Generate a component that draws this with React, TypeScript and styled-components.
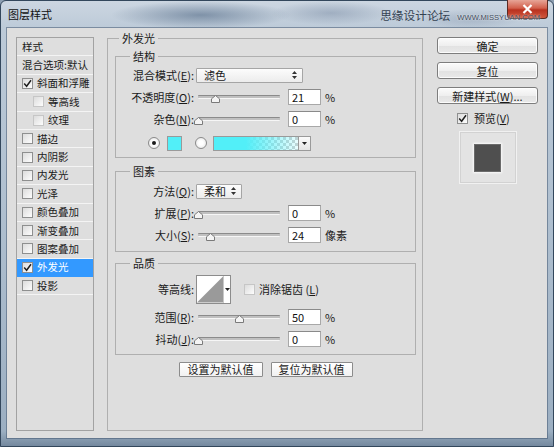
import React from "react";
import styled, { createGlobalStyle } from "styled-components";

const GlobalStyle = createGlobalStyle`
  html, body {
    margin: 0;
    padding: 0;
  }
  body {
    width: 554px;
    height: 447px;
    overflow: hidden;
    background: #8d9fb2;
    font-family: "Noto Sans CJK SC", "Liberation Sans", sans-serif;
    font-size: 11px;
    color: #1a1a1a;
  }
`;

const Window = styled.div`
  position: relative;
  width: 554px;
  height: 447px;
  box-sizing: border-box;
  display: flex;
  flex-direction: column;
  border: 1px solid #33475c;
  border-radius: 6px 6px 0 0;
  background:
    radial-gradient(ellipse 90px 14px at 200px 14px, rgba(70, 95, 125, 0.55), transparent),
    radial-gradient(ellipse 60px 12px at 330px 12px, rgba(90, 110, 140, 0.35), transparent),
    radial-gradient(ellipse 50px 10px at 470px 18px, rgba(90, 110, 140, 0.25), transparent),
    linear-gradient(180deg, #ccd6e1 0px, #bccad8 28px, #b0c0d0 200px, #9cafc2 430px, #6f849a 447px);
`;

const TitleBar = styled.div`
  height: 27px;
  flex-shrink: 0;
  display: flex;
  align-items: flex-start;
  padding: 6px 13px 0 7px;
  box-sizing: border-box;
`;

const Title = styled.span`
  font-size: 11px;
  line-height: 14px;
  color: #111;
`;

const Watermark = styled.div`
  margin-left: auto;
  display: flex;
  align-items: baseline;
  gap: 7px;
  position: relative;
  z-index: 1;
`;

const WatermarkCn = styled.span`
  font-size: 11.7px;
  line-height: 16px;
  color: #344252;
`;

const WatermarkUrl = styled.span`
  font-family: "Liberation Sans", sans-serif;
  font-size: 7.6px;
  color: #3f4b5a;
  text-shadow: 0 0 2px #fff;
`;

const CloseButton = styled.div`
  position: absolute;
  top: -1px;
  right: 5px;
  width: 41px;
  height: 19px;
  box-sizing: border-box;
  border: 1px solid #5b2b22;
  border-top: none;
  border-radius: 0 0 4px 4px;
  background: linear-gradient(180deg, #e7a597 0%, #d2604c 45%, #b9321f 55%, #d0563c 100%);
  display: flex;
  align-items: center;
  justify-content: center;
`;

const Body = styled.div`
  flex: 1;
  min-height: 0;
  margin: 0 6px 8px 6px;
  padding: 9px 9px 7px 9px;
  box-sizing: border-box;
  display: flex;
  align-items: stretch;
  background: #dedede;
  box-shadow: 0 0 0 1px rgba(70, 90, 115, 0.55);
`;

/* ---------- left list ---------- */

const StyleList = styled.div`
  width: 78px;
  flex-shrink: 0;
  box-sizing: border-box;
  border: 1px solid #a2a2a2;
  display: flex;
  flex-direction: column;
`;

const ListItem = styled.div<{ $indent?: boolean; $selected?: boolean }>`
  height: 18.4px;
  flex-shrink: 0;
  box-sizing: border-box;
  display: flex;
  align-items: center;
  gap: 4px;
  padding-left: ${(p) => (p.$indent ? 16 : 5)}px;
  border-bottom: 1px solid ${(p) => (p.$selected ? "#3399ff" : "#f4f4f4")};
  background: ${(p) => (p.$selected ? "#3399ff" : "transparent")};
  color: ${(p) => (p.$selected ? "#fff" : "#1a1a1a")};
  font-size: 10.5px;
  line-height: 14px;
  white-space: nowrap;
`;

const CheckBox = styled.span<{ $faint?: boolean }>`
  width: 11px;
  height: 11px;
  flex-shrink: 0;
  box-sizing: border-box;
  border: 1px solid ${(p) => (p.$faint ? "#c6c6c6" : "#8e8f8f")};
  background: linear-gradient(135deg, #dcdcdc, #fdfdfd);
  display: inline-flex;
  align-items: center;
  justify-content: center;
`;

/* ---------- middle groups ---------- */

const OuterGroup = styled.fieldset`
  width: 316px;
  flex-shrink: 0;
  margin: -6px 0 0 13px;
  padding: 4px 6px 0 7px;
  box-sizing: border-box;
  border: 1px solid #afafaf;
  min-width: 0;
`;

const Legend = styled.legend<{ $inner?: boolean }>`
  padding: 0 3px;
  margin-left: ${(p) => (p.$inner ? 14 : 4)}px;
  font-size: 11px;
  line-height: 14px;
`;

const Section = styled.fieldset<{ $mt: number; $pt: number; $pb: number }>`
  margin: ${(p) => p.$mt}px 0 0 0;
  padding: ${(p) => p.$pt}px 0 ${(p) => p.$pb}px 0;
  border: 1px solid #afafaf;
  min-width: 0;
`;

const Row = styled.div<{ $h?: number }>`
  height: ${(p) => p.$h ?? 22}px;
  display: flex;
  align-items: center;
`;

const FieldLabel = styled.span`
  width: 78px;
  flex-shrink: 0;
  margin-right: 2px;
  text-align: right;
  white-space: nowrap;
  line-height: 14px;
`;

const Select = styled.div<{ $w: number }>`
  width: ${(p) => p.$w}px;
  height: 15px;
  box-sizing: border-box;
  border: 1px solid #a5a5a5;
  border-radius: 1px;
  background: linear-gradient(#fcfcfc, #ececec);
  display: flex;
  align-items: center;
  justify-content: space-between;
  padding: 0 5px 0 7px;
  line-height: 13px;
`;

const Slider = styled.div`
  position: relative;
  width: 86px;
  height: 12px;
  flex-shrink: 0;
  display: flex;
  align-items: center;
`;

const Track = styled.div`
  flex: 1;
  margin: 0 2px;
  height: 4px;
  box-sizing: border-box;
  border-top: 1px solid #8b8b8b;
  border-bottom: 1px solid #f6f6f6;
  background: #c0c0c0;
  border-radius: 1px;
`;

const Thumb = styled.svg`
  position: absolute;
  top: 4px;
`;

const NumberBox = styled.input`
  width: 33px;
  height: 16px;
  margin: 0 0 0 6px;
  box-sizing: border-box;
  border: 1px solid #a8a8a8;
  border-top-color: #8a8a8a;
  background: #fff;
  padding: 0 0 0 3px;
  font: inherit;
  font-size: 11px;
  color: #111;
  outline: none;
`;

const Unit = styled.span`
  margin-left: 4px;
  line-height: 14px;
`;

const ColorRow = styled.div`
  height: 22px;
  margin-top: 2px;
  display: flex;
  align-items: center;
  padding-left: 32px;
`;

const Radio = styled.span<{ $on?: boolean; $gap?: number }>`
  width: 12px;
  height: 12px;
  margin-left: ${(p) => p.$gap ?? 0}px;
  flex-shrink: 0;
  box-sizing: border-box;
  border-radius: 50%;
  border: 1px solid #8a8a8a;
  background: radial-gradient(circle at 50% 50%, #ffffff 30%, #e0e0e0);
  display: flex;
  align-items: center;
  justify-content: center;
  &::after {
    content: "";
    width: 4px;
    height: 4px;
    border-radius: 50%;
    background: ${(p) => (p.$on ? "#1b1b1b" : "transparent")};
  }
`;

const Swatch = styled.span`
  width: 15px;
  height: 15px;
  margin-left: 7px;
  box-sizing: border-box;
  border: 1px solid #9a9a9a;
  background: #52eff8;
`;

const GradientPicker = styled.div`
  margin-left: 6px;
  width: 98px;
  height: 15px;
  box-sizing: border-box;
  border: 1px solid #9a9a9a;
  display: flex;
`;

const GradientBar = styled.span`
  flex: 1;
  background:
    linear-gradient(90deg, #52eff8 0%, #52eff8 38%, rgba(82, 239, 248, 0.12) 100%),
    repeating-conic-gradient(#cfcfcf 0 25%, #ffffff 0 50%) 0 0 / 6px 6px;
`;

const DropButton = styled.span`
  width: 11px;
  border-left: 1px solid #9a9a9a;
  background: linear-gradient(#fbfbfb, #e4e4e4);
  display: flex;
  align-items: center;
  justify-content: center;
`;

const ContourPicker = styled.div`
  width: 35px;
  height: 29px;
  box-sizing: border-box;
  border: 1px solid #8c8c8c;
  background: #fff;
  display: flex;
`;

const ContourStrip = styled.span`
  width: 6px;
  border-left: 1px solid #c8c8c8;
  display: flex;
  align-items: center;
  justify-content: center;
`;

const OptionLabel = styled.label`
  margin-left: 13px;
  display: flex;
  align-items: center;
  gap: 4px;
  line-height: 14px;
`;

const DefaultsRow = styled.div`
  margin-top: 7px;
  display: flex;
  justify-content: center;
  gap: 8px;
`;

const PlainButton = styled.button<{ $w: number }>`
  width: ${(p) => p.$w}px;
  height: 15px;
  padding: 0;
  box-sizing: border-box;
  border: 1px solid #8c8c8c;
  border-radius: 1px;
  background: linear-gradient(#ffffff, #f1f1f1);
  font: inherit;
  font-size: 11px;
  line-height: 13px;
  color: #1a1a1a;
`;

/* ---------- right column ---------- */

const SideColumn = styled.div`
  width: 101px;
  margin-left: 14px;
  flex-shrink: 0;
  display: flex;
  flex-direction: column;
`;

const SideButton = styled.button`
  width: 101px;
  height: 17px;
  margin: 0 0 8px 0;
  padding: 0;
  box-sizing: border-box;
  border: 1px solid #7d7d7d;
  border-radius: 3px;
  background: linear-gradient(#fbfbfb 0%, #efefef 50%, #e2e2e2 51%, #e9e9e9 100%);
  box-shadow: inset 0 0 0 1px rgba(255, 255, 255, 0.8);
  font: inherit;
  font-size: 11px;
  line-height: 14px;
  color: #1a1a1a;
`;

const PreviewToggle = styled.label`
  height: 12px;
  padding-left: 20px;
  display: flex;
  align-items: center;
  gap: 6px;
  line-height: 14px;
`;

const PreviewBox = styled.div`
  margin-top: 7px;
  align-self: center;
  width: 58px;
  height: 53px;
  box-sizing: border-box;
  border: 1px solid #f1f1f1;
  box-shadow: inset 0 0 0 1px #d2d2d2;
  background: #e3e3e3;
  display: flex;
  align-items: center;
  justify-content: center;
`;

const PreviewSquare = styled.div`
  width: 27px;
  height: 28px;
  box-sizing: border-box;
  border: 1px solid #6b6b6b;
  background: #4f4f4f;
  box-shadow: 0 0 2px 1px rgba(255, 255, 255, 0.85);
`;

/* ---------- small drawings ---------- */

const Check = () => (
  <svg width="9" height="9" viewBox="0 0 9 9">
    <path d="M1.2 4.6 L3.6 7.2 L8 1.2" fill="none" stroke="#1e1e1e" strokeWidth="1.5" />
  </svg>
);

const UpDown = () => (
  <svg width="5" height="8" viewBox="0 0 5 8">
    <path d="M2.5 0 L5 3 L0 3 Z M0 5 L5 5 L2.5 8 Z" fill="#333" />
  </svg>
);

const DownTri = () => (
  <svg width="5" height="3" viewBox="0 0 5 3">
    <path d="M0 0 L5 0 L2.5 3 Z" fill="#222" />
  </svg>
);

const SliderControl = ({ pos }: { pos: number }) => (
  <Slider>
    <Track />
    <Thumb width="9" height="8" viewBox="0 0 9 8" style={{ left: 2 + pos * 82 - 4.5 }}>
      <path d="M4.5 0.5 L8.5 3.8 L8.5 7.5 L0.5 7.5 L0.5 3.8 Z" fill="#f4f4f4" stroke="#7a7a7a" />
    </Thumb>
  </Slider>
);

type SliderRowProps = { label: React.ReactNode; value: string; pos: number; unit: string };

const SliderRow = ({ label, value, pos, unit }: SliderRowProps) => (
  <Row>
    <FieldLabel>{label}</FieldLabel>
    <SliderControl pos={pos} />
    <NumberBox readOnly value={value} />
    <Unit>{unit}</Unit>
  </Row>
);

const listItems = [
  { label: "样式" },
  { label: "混合选项:默认" },
  { label: "斜面和浮雕", box: true, checked: true },
  { label: "等高线", box: true, indent: true },
  { label: "纹理", box: true, indent: true },
  { label: "描边", box: true },
  { label: "内阴影", box: true },
  { label: "内发光", box: true },
  { label: "光泽", box: true },
  { label: "颜色叠加", box: true },
  { label: "渐变叠加", box: true },
  { label: "图案叠加", box: true },
  { label: "外发光", box: true, checked: true, selected: true },
  { label: "投影", box: true },
];

export default function App() {
  return (
    <>
      <GlobalStyle />
      <Window>
        <TitleBar>
          <Title>图层样式</Title>
          <Watermark>
            <WatermarkCn>思缘设计论坛</WatermarkCn>
            <WatermarkUrl>WWW.MISSYUAN.COM</WatermarkUrl>
          </Watermark>
          <CloseButton>
            <svg width="11" height="10" viewBox="0 0 11 10">
              <path d="M1.5 1 L9.5 9 M9.5 1 L1.5 9" stroke="#fff" strokeWidth="2.2" />
            </svg>
          </CloseButton>
        </TitleBar>

        <Body>
          <StyleList>
            {listItems.map((it) => (
              <ListItem key={it.label} $indent={it.indent} $selected={it.selected}>
                {it.box && <CheckBox $faint={it.indent}>{it.checked && <Check />}</CheckBox>}
                <span>{it.label}</span>
              </ListItem>
            ))}
          </StyleList>

          <OuterGroup>
            <Legend>外发光</Legend>

            <Section $mt={0} $pt={1} $pb={3}>
              <Legend $inner>结构</Legend>
              <Row>
                <FieldLabel>
                  混合模式(<u>E</u>):
                </FieldLabel>
                <Select $w={107}>
                  <span>滤色</span>
                  <UpDown />
                </Select>
              </Row>
              <SliderRow label={<>不透明度(<u>O</u>):</>} value="21" pos={0.21} unit="%" />
              <SliderRow label={<>杂色(<u>N</u>):</>} value="0" pos={0} unit="%" />
              <ColorRow>
                <Radio $on />
                <Swatch />
                <Radio $gap={13} />
                <GradientPicker>
                  <GradientBar />
                  <DropButton>
                    <DownTri />
                  </DropButton>
                </GradientPicker>
              </ColorRow>
            </Section>

            <Section $mt={6} $pt={2} $pb={5}>
              <Legend $inner>图素</Legend>
              <Row>
                <FieldLabel>
                  方法(<u>Q</u>):
                </FieldLabel>
                <Select $w={46}>
                  <span>柔和</span>
                  <UpDown />
                </Select>
              </Row>
              <SliderRow label={<>扩展(<u>P</u>):</>} value="0" pos={0} unit="%" />
              <SliderRow label={<>大小(<u>S</u>):</>} value="24" pos={0.15} unit="像素" />
            </Section>

            <Section $mt={4} $pt={2} $pb={4}>
              <Legend $inner>品质</Legend>
              <Row $h={34}>
                <FieldLabel>等高线:</FieldLabel>
                <ContourPicker>
                  <svg width="27" height="27" viewBox="0 0 27 27">
                    <path d="M0 27 L27 0 L27 27 Z" fill="#9a9a9a" />
                  </svg>
                  <ContourStrip>
                    <DownTri />
                  </ContourStrip>
                </ContourPicker>
                <OptionLabel>
                  <CheckBox $faint />
                  <span>
                    消除锯齿 (<u>L</u>)
                  </span>
                </OptionLabel>
              </Row>
              <SliderRow label={<>范围(<u>R</u>):</>} value="50" pos={0.5} unit="%" />
              <SliderRow label={<>抖动(<u>J</u>):</>} value="0" pos={0} unit="%" />
            </Section>

            <DefaultsRow>
              <PlainButton $w={84}>设置为默认值</PlainButton>
              <PlainButton $w={82}>复位为默认值</PlainButton>
            </DefaultsRow>
          </OuterGroup>

          <SideColumn>
            <SideButton>确定</SideButton>
            <SideButton>复位</SideButton>
            <SideButton>
              新建样式(<u>W</u>)...
            </SideButton>
            <PreviewToggle>
              <CheckBox>
                <Check />
              </CheckBox>
              <span>
                预览(<u>V</u>)
              </span>
            </PreviewToggle>
            <PreviewBox>
              <PreviewSquare />
            </PreviewBox>
          </SideColumn>
        </Body>
      </Window>
    </>
  );
}
